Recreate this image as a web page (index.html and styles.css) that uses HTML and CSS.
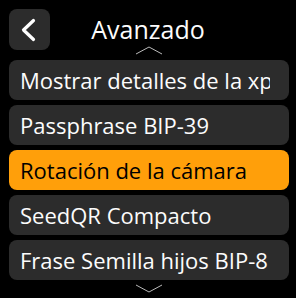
FILE: index.html
```html
<!DOCTYPE html>
<html lang="es">
<head>
  <meta charset="UTF-8" />
  <meta name="viewport" content="width=device-width, initial-scale=1.0"/>
  <title>Avanzado</title>
  <link rel="stylesheet" href="styles.css">
</head>
<body>

<div class="top-nav">
  <a class="back-btn" href="#">
    <svg width="41" height="41" viewBox="0 0 41 41">
      <polyline points="24.5,11.5 14.5,21 24.5,30.5" fill="none" stroke="#fff" stroke-width="3.2" stroke-linecap="round" stroke-linejoin="round"/>
    </svg>
  </a>
  <div class="title">Avanzado</div>
  <div></div>
</div>

<div class="menu">
  <svg class="arrow arrow-up" width="28" height="9" viewBox="0 0 28 9">
    <polyline points="1,8 14,1 27,8" fill="none" stroke="#bbb" stroke-width="1"/>
  </svg>

  <div class="item"><span class="label clip">Mostrar detalles de la xpub</span></div>
  <div class="item"><span class="label">Passphrase BIP-39</span></div>
  <div class="item selected"><span class="label">Rotación de la cámara</span></div>
  <div class="item"><span class="label">SeedQR Compacto</span></div>
  <div class="item"><span class="label">Frase Semilla hijos BIP-8</span></div>

  <svg class="arrow arrow-down" width="28" height="9" viewBox="0 0 28 9">
    <polyline points="1,1 14,8 27,1" fill="none" stroke="#bbb" stroke-width="1"/>
  </svg>
</div>

</body>
</html>
```

FILE: styles.css
```css
body {
  margin: 0;
  width: 296px;
  height: 298px;
  background: #000;
  color: #fcfcfc;
  font-family: "Open Sans", sans-serif;
  overflow: hidden;
}
.top-nav {
  display: grid;
  grid-template-columns: 41px 1fr 41px;
  align-items: center;
  padding: 9px 9px 0 9px;
  height: 41px;
}
.back-btn {
  display: block;
  width: 41px;
  height: 41px;
  background: #2c2c2c;
  border-radius: 8px;
}
.back-btn svg {
  display: block;
}
.title {
  text-align: center;
  font-size: 25px;
  line-height: 41px;
  margin-top: 0;
}
.menu {
  position: relative;
  display: flex;
  flex-direction: column;
  gap: 5px;
  margin-top: 10px;
  padding: 0 7px 0 9px;
}
.item {
  height: 40px;
  background: #2c2c2c;
  border-radius: 8px;
  padding: 0 0 0 11px;
  display: flex;
  align-items: center;
  font-size: 22px;
  white-space: nowrap;
  overflow: hidden;
}
.label {
  display: block;
  overflow: hidden;
}
.label.clip {
  max-width: 250px;
}
.item.selected {
  background: #ff9f0a;
  color: #000;
}
.arrow {
  position: absolute;
  left: 135px;
}
.arrow-up {
  top: -14px;
}
.arrow-down {
  bottom: -13px;
}
```
